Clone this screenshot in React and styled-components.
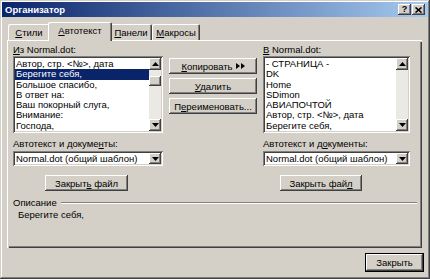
import React from 'react';
import styled, { createGlobalStyle } from 'styled-components';

const Global = createGlobalStyle`
  html, body { margin: 0; padding: 0; background: #d4d0c8; }
  body { font-family: "Liberation Sans", Arial, sans-serif; font-size: 9.5px; color: #000; }
  * { box-sizing: border-box; }
`;

const raisedShadow = 'inset -1px -1px #404040, inset 1px 1px #fff, inset -2px -2px #808080, inset 2px 2px #d4d0c8';
const sunkenShadow = 'inset 1px 1px #808080, inset -1px -1px #fff, inset 2px 2px #404040, inset -2px -2px #d4d0c8';

const Window = styled.div`
  width: 430px;
  height: 279px;
  padding: 2px;
  background: #d4d0c8;
  box-shadow: inset -1px -1px #404040, inset 1px 1px #d4d0c8, inset -2px -2px #808080, inset 2px 2px #fff;
  display: flex;
  flex-direction: column;
  overflow: hidden;
`;

const TitleBar = styled.div`
  height: 15px;
  display: flex;
  align-items: center;
  padding: 0 3px 0 3px;
  background: linear-gradient(to right, #0a246a, #a6caf0);
`;

const Title = styled.div`
  flex: 1;
  color: #fff;
  font-weight: bold;
  font-size: 9.5px;
  line-height: 15px;
`;

const CaptionButton = styled.div`
  width: 13px;
  height: 11px;
  margin-left: ${p => p.$gap || 0}px;
  background: #d4d0c8;
  box-shadow: inset -1px -1px #404040, inset 1px 1px #fff, inset -2px -2px #808080;
  display: flex;
  align-items: center;
  justify-content: center;
  font-weight: bold;
  font-size: 9px;
  line-height: 11px;
`;

const TabStrip = styled.div`
  margin-top: 5px;
  height: 18px;
  padding-left: 6px;
  display: flex;
  align-items: flex-end;
`;

const Tab = styled.div`
  position: relative;
  width: ${p => (p.$active ? p.$w + 4 : p.$w)}px;
  height: ${p => (p.$active ? 19 : 16)}px;
  margin: 0 ${p => (p.$active ? -2 : 0)}px ${p => (p.$active ? -1 : 0)}px;
  z-index: ${p => (p.$active ? 2 : 1)};
  background: #d4d0c8;
  border-radius: 2px 2px 0 0;
  box-shadow: inset 1px 1px #fff, inset -1px 0 #404040, inset -2px 0 #808080;
  display: flex;
  align-items: center;
  justify-content: center;
  padding-bottom: ${p => (p.$active ? 2 : 0)}px;
`;

const Panel = styled.div`
  margin-left: 5px;
  width: 415px;
  height: 208px;
  padding: 4px 6px 0 6px;
  background: #d4d0c8;
  box-shadow: inset 1px 1px #fff, inset 2px 2px #d4d0c8, inset -1px -1px #404040, inset -2px -2px #808080;
  display: flex;
  flex-direction: column;
`;

const Columns = styled.div`
  display: grid;
  grid-template-columns: 150px 88px 147px;
  column-gap: 6px;
`;

const Column = styled.div`
  display: flex;
  flex-direction: column;
  padding-top: ${p => p.$top || 0}px;
  gap: ${p => p.$gap || 0}px;
`;

const Label = styled.div`
  height: 11px;
  line-height: 11px;
  margin-top: ${p => p.$mt || 0}px;
  margin-bottom: ${p => p.$mb || 0}px;
  white-space: nowrap;
`;

const U = styled.span`
  text-decoration: underline;
`;

const ListBox = styled.div`
  width: 100%;
  height: 77px;
  background: #fff;
  box-shadow: ${sunkenShadow};
  padding: 2px;
  display: flex;
`;

const Items = styled.div`
  flex: 1;
  overflow: hidden;
  padding-top: 1px;
`;

const Item = styled.div`
  height: 10.3px;
  line-height: 10.3px;
  padding-left: 1px;
  white-space: nowrap;
  background: ${p => (p.$sel ? '#0a246a' : 'transparent')};
  color: ${p => (p.$sel ? '#fff' : '#000')};
`;

const ScrollBar = styled.div`
  width: 12px;
  display: flex;
  flex-direction: column;
  background: #ebe9e4;
`;

const ArrowBtn = styled.div`
  width: 12px;
  height: 12px;
  flex: none;
  background: #d4d0c8;
  box-shadow: ${raisedShadow};
  display: flex;
  align-items: center;
  justify-content: center;
`;

const Track = styled.div`
  flex: 1;
  padding-top: ${p => p.$thumb || 0}px;
`;

const Thumb = styled.div`
  height: 10px;
  background: #d4d0c8;
  box-shadow: ${raisedShadow};
`;

const Button = styled.div`
  width: ${p => p.$w || 88}px;
  height: ${p => p.$h || 16}px;
  margin-left: ${p => p.$ml || 0}px;
  margin-top: ${p => p.$mt || 0}px;
  background: #d4d0c8;
  box-shadow: ${p => (p.$default ? `inset 0 0 0 1px #000, inset -2px -2px #404040, inset 2px 2px #fff, inset -3px -3px #808080` : raisedShadow)};
  display: flex;
  align-items: center;
  justify-content: center;
  gap: 3px;
  white-space: nowrap;
`;

const Combo = styled.div`
  height: 15px;
  margin-top: 2px;
  background: #fff;
  box-shadow: ${sunkenShadow};
  padding: 2px;
  display: flex;
  align-items: center;
`;

const ComboText = styled.div`
  flex: 1;
  padding-left: 1px;
  line-height: 11px;
  white-space: nowrap;
  overflow: hidden;
`;

const ComboBtn = styled(ArrowBtn)`
  height: 11px;
`;

const GroupHead = styled.div`
  margin-top: 6px;
  width: 404px;
  display: flex;
  align-items: center;
  gap: 4px;
  height: 11px;
`;

const Etched = styled.div`
  flex: 1;
  height: 2px;
  border-top: 1px solid #808080;
  border-bottom: 1px solid #fff;
`;

const Description = styled.div`
  margin-top: 1px;
  padding-left: 5px;
  line-height: 11px;
`;

const Footer = styled.div`
  margin-top: 5px;
  display: flex;
  justify-content: flex-end;
  padding-right: 4px;
`;

const Tri = ({ dir }) => (
  <svg width="7" height="4" viewBox="0 0 7 4">
    {dir === 'up' ? <path d="M3.5 0 L7 4 L0 4 Z" fill="#000" /> : <path d="M0 0 L7 0 L3.5 4 Z" fill="#000" />}
  </svg>
);

const DoubleArrow = () => (
  <svg width="9" height="6" viewBox="0 0 9 6">
    <path d="M0 0 L4 3 L0 6 Z M5 0 L9 3 L5 6 Z" fill="#000" />
  </svg>
);

const CloseX = () => (
  <svg width="7" height="6" viewBox="0 0 7 6">
    <path d="M0.5 0.5 L6.5 5.5 M6.5 0.5 L0.5 5.5" stroke="#000" strokeWidth="1.6" />
  </svg>
);

const List = ({ items, selected, thumb }) => (
  <ListBox>
    <Items>
      {items.map((t, i) => (
        <Item key={i} $sel={i === selected}>{t}</Item>
      ))}
    </Items>
    <ScrollBar>
      <ArrowBtn><Tri dir="up" /></ArrowBtn>
      <Track $thumb={thumb}>{thumb != null && <Thumb />}</Track>
      <ArrowBtn><Tri dir="down" /></ArrowBtn>
    </ScrollBar>
  </ListBox>
);

const leftItems = [
  'Автор, стр. <№>, дата',
  'Берегите себя,',
  'Большое спасибо,',
  'В ответ на:',
  'Ваш покорный слуга,',
  'Внимание:',
  'Господа,',
];

const rightItems = [
  '- СТРАНИЦА -',
  'DK',
  'Home',
  'SDimon',
  'АВИАПОЧТОЙ',
  'Автор, стр. <№>, дата',
  'Берегите себя,',
];

export default function App() {
  return (
    <>
      <Global />
      <Window>
        <TitleBar>
          <Title>Организатор</Title>
          <CaptionButton>?</CaptionButton>
          <CaptionButton $gap={1}><CloseX /></CaptionButton>
        </TitleBar>
        <TabStrip>
          <Tab $w={42}><span><U>С</U>тили</span></Tab>
          <Tab $w={60} $active><span><U>А</U>втотекст</span></Tab>
          <Tab $w={42}><span><U>П</U>анели</span></Tab>
          <Tab $w={48}><span><U>М</U>акросы</span></Tab>
        </TabStrip>
        <Panel>
          <Columns>
            <Column>
              <Label $mb={1}><U>И</U>з Normal.dot:</Label>
              <List items={leftItems} selected={1} thumb={6} />
            </Column>
            <Column $top={14} $gap={4}>
              <Button><span><U>К</U>опировать</span><DoubleArrow /></Button>
              <Button><span><U>У</U>далить</span></Button>
              <Button><span>П<U>е</U>реименовать...</span></Button>
            </Column>
            <Column>
              <Label $mb={1}><U>В</U> Normal.dot:</Label>
              <List items={rightItems} />
            </Column>
          </Columns>
          <Columns>
            <Column>
              <Label $mt={5}>Автотекст и докуме<U>н</U>ты:</Label>
              <Combo>
                <ComboText>Normal.dot (общий шаблон)</ComboText>
                <ComboBtn><Tri dir="down" /></ComboBtn>
              </Combo>
              <Button $w={83} $ml={32} $mt={9}><span>Закрыт<U>ь</U> файл</span></Button>
            </Column>
            <Column />
            <Column>
              <Label $mt={5}>Автотекст и д<U>о</U>кументы:</Label>
              <Combo>
                <ComboText>Normal.dot (общий шаблон)</ComboText>
                <ComboBtn><Tri dir="down" /></ComboBtn>
              </Combo>
              <Button $w={82} $ml={17} $mt={9}><span>Закрыть фай<U>л</U></span></Button>
            </Column>
          </Columns>
          <GroupHead>
            <span>Описание</span>
            <Etched />
          </GroupHead>
          <Description>Берегите себя,</Description>
        </Panel>
        <Footer>
          <Button $w={59} $h={19} $default>Закрыть</Button>
        </Footer>
      </Window>
    </>
  );
}
